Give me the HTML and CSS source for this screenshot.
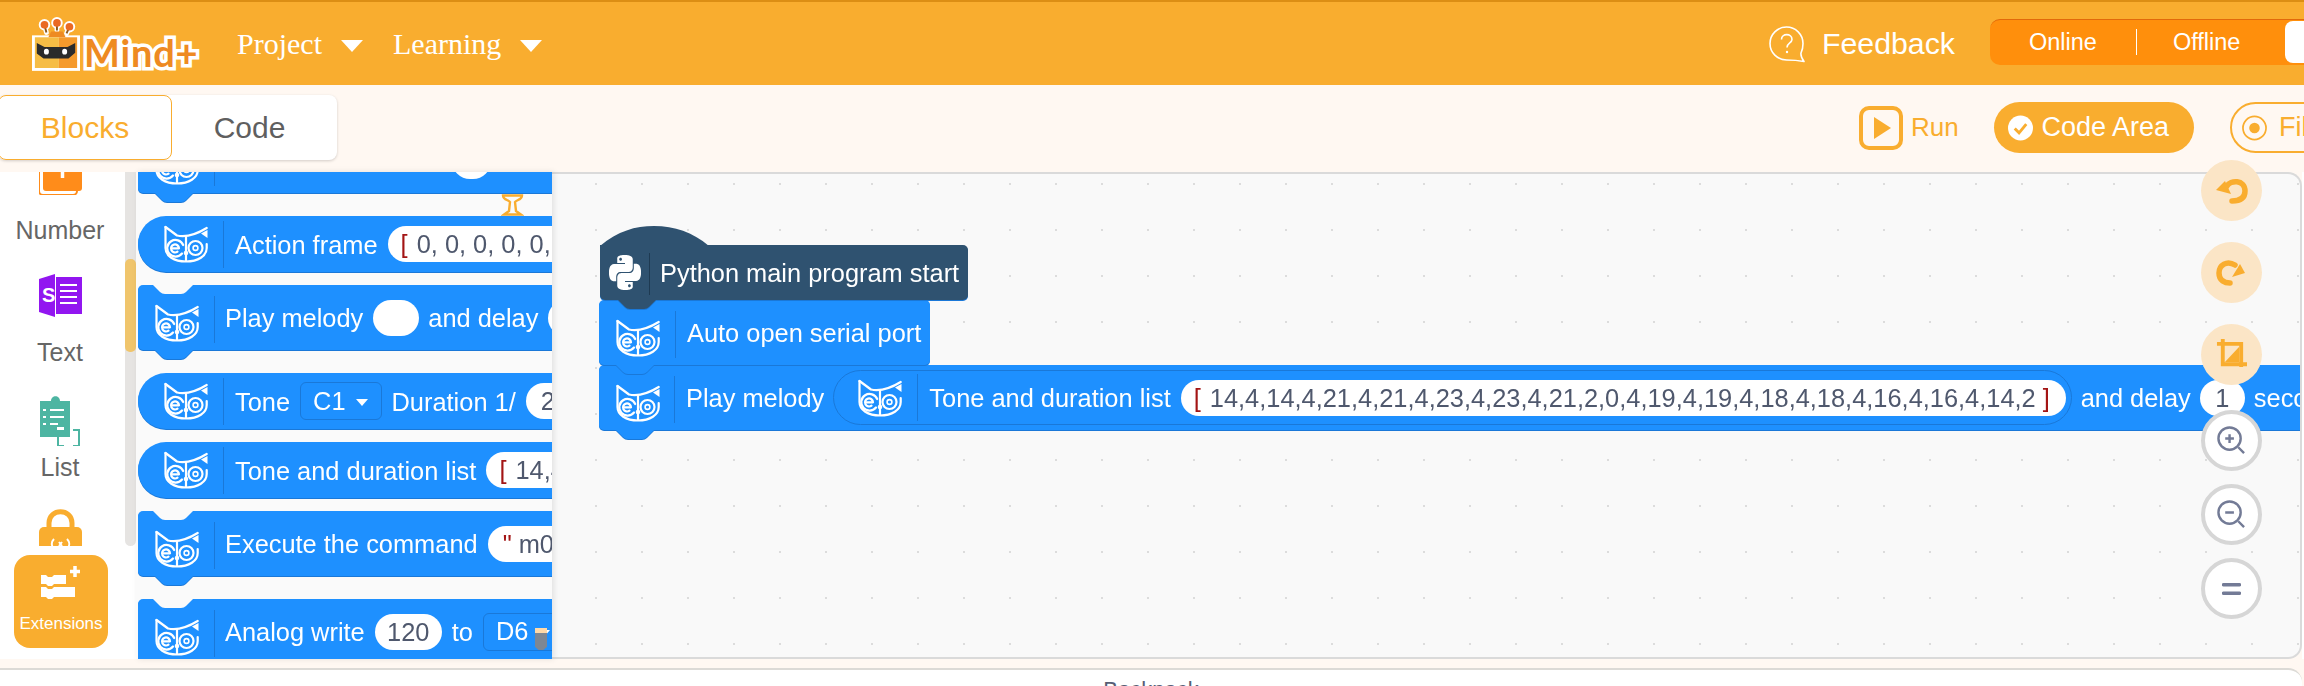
FILE: index.html
```html
<!DOCTYPE html>
<html lang="en">
<head>
<meta charset="utf-8">
<title>Mind+</title>
<link rel="stylesheet" href="styles.css">
</head>
<body>
<svg class="defs" width="0" height="0" aria-hidden="true">
  <symbol id="cat" viewBox="0 0 44 38">
    <g fill="none" stroke="#fff" stroke-width="2.2" stroke-linecap="round" stroke-linejoin="round">
      <path d="M1.5 2V23C1.5 31 10 36.5 22 36.5S42.7 31 42.7 23V19"/>
      <path d="M1.5 2L13 10.5C23 12.5 33 9 42.7 3"/>
      <path d="M22 11V36"/>
      <path d="M18 28.5A8.3 8.3 0 1 1 19.2 20"/>
      <path d="M7 23.3H15A4 4 0 1 0 13.5 26.6"/>
      <circle cx="31.5" cy="23" r="7"/>
      <circle cx="31.5" cy="23" r="2.4" stroke-width="1.6"/>
    </g>
    <circle cx="22" cy="28" r="2.3" fill="#fff"/>
    <path d="M37 8.5L43.5 5V13Z" fill="#fff"/>
  </symbol>
</svg>

<header class="topbar">
  <div class="logo">
    <svg class="robot" viewBox="0 0 50 56" aria-hidden="true">
      <path d="M15 16L13 8M26 14V6M36 17L39 10" stroke="#fff" stroke-width="5" stroke-linecap="round"/>
      <circle cx="13" cy="8" r="6" fill="#fff"/><circle cx="26" cy="6" r="6" fill="#fff"/><circle cx="39" cy="10" r="6" fill="#fff"/>
      <path d="M15 16L13 8M26 14V6M36 17L39 10" stroke="#8a5a20" stroke-width="2"/>
      <circle cx="13" cy="8" r="4" fill="#ea6a24"/><circle cx="26" cy="6" r="4" fill="#ea6a24"/><circle cx="39" cy="10" r="4" fill="#ea6a24"/>
      <rect x="0" y="19" width="50" height="37" fill="#fff"/>
      <path d="M17 21L20 15H32L35 21Z" fill="#ee8a22"/>
      <rect x="3" y="21" width="25" height="32" fill="#f6bd45"/>
      <rect x="28" y="21" width="19" height="32" fill="#f59a2c"/>
      <path d="M5 27L13 31H37L45 27V37L38 43H12L5 38Z" fill="#2b2b2b"/>
      <ellipse cx="15" cy="36" rx="2.600" ry="3" fill="#fff"/><ellipse cx="34" cy="36" rx="2.600" ry="3" fill="#fff"/>
    </svg>
    <span class="logo-text">Mind+</span>
  </div>
  <nav class="nav">
    <span class="nav-item">Project<i class="caret"></i></span>
    <span class="nav-item">Learning<i class="caret"></i></span>
  </nav>
  <div class="top-right">
    <div class="feedback">
      <svg class="fb-icon" viewBox="0 0 38 38" aria-hidden="true">
        <path d="M18.500 2A16.500 16.500 0 1 0 18.500 35C23 35 28 35 36 36.500C33.500 33 32.500 31 33 28C34.500 25 35 22 35 18.500A16.500 16.500 0 0 0 18.500 2Z" fill="none" stroke="#fff" stroke-width="1.600" stroke-linejoin="round"/>
        <path d="M13.500 14.500C13.500 8 24 8 24 14.500C24 18 19 18 19 22.500" fill="none" stroke="#fff" stroke-width="1.600"/>
        <circle cx="19" cy="27" r="1.200" fill="#fff"/>
      </svg>
      <span>Feedback</span>
    </div>
    <div class="mode">
      <span class="mode-item">Online</span>
      <i class="mode-div"></i>
      <span class="mode-item">Offline</span>
      <i class="mode-white"></i>
    </div>
  </div>
</header>

<div class="subbar">
  <div class="tabs">
    <span class="tab tab-on">Blocks</span>
    <span class="tab tab-code">Code</span>
  </div>
  <div class="actions">
    <span class="run">
      <svg class="run-icon" viewBox="0 0 44 44" aria-hidden="true">
        <rect x="2" y="2" width="40" height="40" rx="8" fill="none" stroke="#f9ad2f" stroke-width="4"/>
        <path d="M15 11L32 22L15 33Z" fill="#f9ad2f"/>
      </svg>
      Run
    </span>
    <span class="pill-btn pill-on">
      <svg class="pb-icon" viewBox="0 0 26 26" aria-hidden="true">
        <circle cx="13" cy="13" r="13" fill="#fff"/>
        <path d="M7 13.500L11.500 18L19 9" fill="none" stroke="#f9ad2f" stroke-width="3"/>
      </svg>
      Code Area
    </span>
    <span class="pill-btn pill-off">
      <svg class="pb-icon" viewBox="0 0 26 26" aria-hidden="true">
        <circle cx="13" cy="13" r="12" fill="none" stroke="#f9ad2f" stroke-width="1.800"/>
        <circle cx="13" cy="13" r="5.500" fill="#f9ad2f"/>
      </svg>
      File Area
    </span>
  </div>
</div>

<main class="main">
  <aside class="sidebar">
    <div class="cat-item first">
      <svg class="cat-icon" viewBox="0 0 43 43" aria-hidden="true">
        <rect x="0" y="5" width="38" height="38" rx="4" fill="none" stroke="#ff8c1a" stroke-width="2"/>
        <rect x="4" y="0" width="39" height="39" rx="3" fill="#ff8c1a"/>
        <path d="M23.500 8V26" stroke="#fff" stroke-width="3.500"/>
      </svg>
      <span class="cat-label">Number</span>
    </div>
    <div class="cat-item">
      <svg class="cat-icon" viewBox="0 0 43 43" aria-hidden="true">
        <path d="M0 5L16 0V43L0 38Z" fill="#9216f0"/>
        <rect x="17" y="3" width="26" height="37" fill="#9216f0"/>
        <path d="M21 11H38M21 17H38M21 23H38M21 29H38" stroke="#fff" stroke-width="2"/>
        <text class="s-letter" x="3" y="28">S</text>
      </svg>
      <span class="cat-label">Text</span>
    </div>
    <div class="cat-item list">
      <svg class="cat-icon" viewBox="0 0 40 50" aria-hidden="true">
        <path d="M0 5H11C11 -1.500 20 -1.500 20 5H30V41H0Z" fill="#4db5a2"/>
        <path d="M10 21H24M10 14H24M10 28H18M3 14H6M3 21H6M3 28H6" stroke="#fff" stroke-width="2"/>
        <path d="M24 34H18V50H24M33 34H39V50H33" fill="none" stroke="#4db5a2" stroke-width="2"/>
        <rect x="17" y="31" width="7" height="3" fill="#fff"/>
      </svg>
      <span class="cat-label">List</span>
    </div>
    <div class="cat-item">
      <svg class="cat-icon" viewBox="0 0 43 43" aria-hidden="true">
        <path d="M10 20V14C10 -1 33 -1 33 14V20" fill="none" stroke="#f9ad2f" stroke-width="5"/>
        <rect x="0" y="18" width="43" height="30" rx="5" fill="#f9ad2f"/>
        <path d="M15 30C12 33 12 37 15 40M28 30C31 33 31 37 28 40" fill="none" stroke="#fff" stroke-width="2"/>
        <path d="M20 33L23 37M23 33L20 37" stroke="#fff" stroke-width="2"/>
      </svg>
    </div>
    <div class="ext-wrap">
      <div class="ext">
        <svg class="ext-icon" viewBox="0 0 40 34" aria-hidden="true">
          <path d="M0 9H5L7 11H11L13 9H25V18H13L11 20H7L5 18H0Z" fill="#fff"/>
          <path d="M0 21H5L7 23H11L13 21H34V31H13L11 33H7L5 31H0Z" fill="#fff"/>
          <path d="M34 0V11M29 5.500H39" stroke="#fff" stroke-width="3.500"/>
        </svg>
        <span>Extensions</span>
      </div>
    </div>
  </aside>

  <div class="track"><i class="thumb"></i></div>

  <section class="flyout">
    <div class="block stack clipped">
      <svg class="cat"><use href="#cat"/></svg><i class="sep"></i>
      <span class="pill blank-end"></span>
    </div>
    <div class="block reporter">
      <svg class="cat"><use href="#cat"/></svg><i class="sep"></i>
      <span class="lbl">Action frame</span>
      <span class="pill long"><b class="br br-open">[</b> 0, 0, 0, 0, 0, 0, 0</span>
    </div>
    <div class="block stack">
      <svg class="cat"><use href="#cat"/></svg><i class="sep"></i>
      <span class="lbl">Play melody</span>
      <span class="pill blank tight"></span>
      <span class="lbl">and delay</span>
      <span class="pill blank"></span>
    </div>
    <div class="block reporter">
      <svg class="cat"><use href="#cat"/></svg><i class="sep"></i>
      <span class="lbl">Tone</span>
      <span class="drop">C1<i class="tri"></i></span>
      <span class="lbl">Duration 1/</span>
      <span class="pill">2</span>
    </div>
    <div class="block reporter">
      <svg class="cat"><use href="#cat"/></svg><i class="sep"></i>
      <span class="lbl">Tone and duration list</span>
      <span class="pill long"><b class="br br-open">[</b> 14,4,14,4</span>
    </div>
    <div class="block stack">
      <svg class="cat"><use href="#cat"/></svg><i class="sep"></i>
      <span class="lbl">Execute the command</span>
      <span class="pill long"><b class="br">"</b> m0 m1</span>
    </div>
    <div class="block stack">
      <svg class="cat"><use href="#cat"/></svg><i class="sep"></i>
      <span class="lbl">Analog write</span>
      <span class="pill num">120</span>
      <span class="lbl">to</span>
      <span class="drop">D6<i class="tri"></i></span>
    </div>
    <svg class="pin" viewBox="0 0 23 22" aria-hidden="true">
      <path d="M2 1.500H21C21 6 15 6 14 8L15 17L20 20.500H3L8 17L9 8C8 6 2 6 2 1.500Z" fill="none" stroke="#f9ad2f" stroke-width="2.400"/>
    </svg>
    <i class="cursor"></i>
  </section>

  <section class="workspace">
    <div class="canvas">
      <div class="script">
        <div class="block stack hat">
          <svg class="py" viewBox="0 0 24 24" preserveAspectRatio="none" aria-hidden="true">
            <path fill="#fff" d="M14.25.18l.9.2.73.26.59.3.45.32.34.34.25.34.16.33.1.3.04.26.02.2-.01.13V8.5l-.05.63-.13.55-.21.46-.26.38-.3.31-.33.25-.35.19-.35.14-.33.1-.3.07-.26.04-.21.02H8.77l-.69.05-.59.14-.5.22-.41.27-.33.32-.27.35-.2.36-.15.37-.1.35-.07.32-.04.27-.02.21v3.06H3.17l-.21-.03-.28-.07-.32-.12-.35-.18-.36-.26-.36-.36-.35-.46-.32-.59-.28-.73-.21-.88-.14-1.05-.05-1.23.06-1.22.16-1.04.24-.87.32-.71.36-.57.4-.44.42-.33.42-.24.4-.16.36-.1.32-.05.24-.01h.16l.06.01h8.16v-.83H6.18l-.01-2.75-.02-.37.05-.34.11-.31.17-.28.25-.26.31-.23.38-.2.44-.18.51-.15.58-.12.64-.1.71-.06.77-.04.84-.02 1.27.05zm-6.3 1.98l-.23.33-.08.41.08.41.23.34.33.22.41.09.41-.09.33-.22.23-.34.08-.41-.08-.41-.23-.33-.33-.22-.41-.09-.41.09zm13.09 3.95l.28.06.32.12.35.18.36.27.36.35.35.47.32.59.28.73.21.88.14 1.04.05 1.23-.06 1.23-.16 1.04-.24.86-.32.71-.36.57-.4.45-.42.33-.42.24-.4.16-.36.09-.32.05-.24.02-.16-.01h-8.22v.82h5.84l.01 2.76.02.36-.05.34-.11.31-.17.29-.25.25-.31.24-.38.2-.44.17-.51.15-.58.13-.64.09-.71.07-.77.04-.84.01-1.27-.04-1.07-.14-.9-.2-.73-.25-.59-.3-.45-.33-.34-.34-.25-.34-.16-.33-.1-.3-.04-.25-.02-.2.01-.13v-5.34l.05-.64.13-.54.21-.46.26-.38.3-.32.33-.24.35-.2.35-.14.33-.1.3-.06.26-.04.21-.02.13-.01h5.84l.69-.05.59-.14.5-.21.41-.28.33-.32.27-.35.2-.36.15-.36.1-.35.07-.32.04-.28.02-.21V6.07h2.09l.14.01zm-6.47 14.25l-.23.33-.08.41.08.41.23.33.33.23.41.08.41-.08.33-.23.23-.33.08-.41-.08-.41-.23-.33-.33-.23-.41-.08-.41.08z"/>
          </svg>
          <i class="sep sep-dark"></i>
          <span class="lbl">Python main program start</span>
        </div>
        <div class="block stack auto">
          <svg class="cat"><use href="#cat"/></svg><i class="sep"></i>
          <span class="lbl">Auto open serial port</span>
        </div>
        <div class="block stack melody">
          <svg class="cat"><use href="#cat"/></svg><i class="sep"></i>
          <span class="lbl">Play melody</span>
          <div class="block reporter nested">
            <svg class="cat"><use href="#cat"/></svg><i class="sep"></i>
            <span class="lbl">Tone and duration list</span>
            <span class="pill tune"><b class="br br-open">[</b> 14,4,14,4,21,4,21,4,23,4,23,4,21,2,0,4,19,4,19,4,18,4,18,4,16,4,16,4,14,2 <b class="br">]</b></span>
          </div>
          <span class="lbl">and delay</span>
          <span class="pill sec">1</span>
          <span class="lbl">seconds</span>
        </div>
      </div>
    </div>

    <div class="tools">
      <span class="tool warm">
        <svg viewBox="0 0 32 26" class="t-undo" aria-hidden="true">
          <path d="M11 8C14 2 29 1 29 13C29 22 21 23 16 23" fill="none" stroke="#f9ad2f" stroke-width="5.500" stroke-linecap="round"/>
          <path d="M0 12L9 3L15 16Z" fill="#f9ad2f"/>
        </svg>
      </span>
      <span class="tool warm">
        <svg viewBox="0 0 32 26" class="t-undo" aria-hidden="true">
          <path d="M19 5C11 0 3 5 3 13C3 21 9 23 14 23" fill="none" stroke="#f9ad2f" stroke-width="5.500" stroke-linecap="round"/>
          <path d="M29 13L16 17L24 4Z" fill="#f9ad2f"/>
        </svg>
      </span>
      <span class="tool warm crop-gap">
        <svg viewBox="0 0 32 32" class="t-crop" aria-hidden="true">
          <path d="M1 5H26V29M7 0V26H32" fill="none" stroke="#f9ad2f" stroke-width="4"/>
          <path d="M9 24L24 8V24Z" fill="#f9ad2f"/>
        </svg>
      </span>
      <span class="tool zoom">
        <svg viewBox="0 0 30 30" class="t-zoom" aria-hidden="true">
          <circle cx="13" cy="13" r="11.500" fill="none" stroke="#737b96" stroke-width="2.500"/>
          <path d="M22 22L28 28M8.500 13H17.500M13 8.500V17.500" stroke="#737b96" stroke-width="2.500"/>
        </svg>
      </span>
      <span class="tool zoom">
        <svg viewBox="0 0 30 30" class="t-zoom" aria-hidden="true">
          <circle cx="13" cy="13" r="11.500" fill="none" stroke="#737b96" stroke-width="2.500"/>
          <path d="M22 22L28 28M8.500 13H17.500" stroke="#737b96" stroke-width="2.500"/>
        </svg>
      </span>
      <span class="tool zoom">
        <svg viewBox="0 0 20 14" class="t-eq" aria-hidden="true">
          <path d="M1.500 2.500H18.500M1.500 11.500H18.500" stroke="#737b96" stroke-width="3.500" stroke-linecap="round"/>
        </svg>
      </span>
    </div>
  </section>
</main>

<footer class="backpack">Backpack</footer>
</body>
</html>
```
FILE: styles.css
```css
* { box-sizing: border-box; }
html, body { margin: 0; padding: 0; }
body {
  width: 2304px;
  height: 686px;
  overflow: hidden;
  background: #fff8f2;
  font-family: "Liberation Sans", Arial, sans-serif;
  color: #fff;
}
.defs { position: absolute; }

/* Top bar */
.topbar {
  display: flex;
  align-items: center;
  height: 85px;
  background: #f9ad2f;
  border-top: 2px solid #dc8e14;
}
.logo { display: flex; align-items: flex-end; margin-left: 32px; width: 205px; height: 60px; }
.robot { width: 48px; height: 54px; flex: none; margin-bottom: 3px; }
.logo-text {
  font-family: "Lato", "Liberation Sans", sans-serif;
  font-weight: 700;
  font-size: 38px;
  line-height: 44px;
  letter-spacing: 0.8px;
  color: #ee8a22;
  -webkit-text-stroke: 7px #fff;
  paint-order: stroke fill;
  margin-left: 4px;
}
.nav { display: flex; gap: 30px; font-family: "Liberation Serif", "Times New Roman", serif; font-size: 30px; }
.nav-item { display: flex; align-items: center; }
.caret {
  margin: 5px 0 0 19px;
  border-left: 11px solid transparent;
  border-right: 11px solid transparent;
  border-top: 12px solid #fff;
}
.top-right { display: flex; align-items: center; margin-left: auto; }
.feedback { display: flex; align-items: center; gap: 16px; font-size: 30.3px; margin-right: 35px; }
.fb-icon { width: 38px; height: 38px; }
.mode {
  display: flex;
  align-items: center;
  width: 314px;
  height: 46px;
  margin-top: -4px;
  padding-left: 39px;
  background: #ff8f0c;
  border-top: 1px solid #e2690a;
  border-radius: 10px 0 0 10px;
  font-size: 23.5px;
}
.mode-div { width: 1px; height: 26px; background: #fff; margin: 0 36px 0 39px; }
.mode-white { width: 19px; height: 42px; margin-left: auto; background: #fff; border-radius: 8px 0 0 8px; }

/* Second bar */
.subbar { display: flex; height: 87px; padding-top: 10px; background: #fff8f2; }
.tabs {
  display: flex;
  height: 65px;
  background: #fff;
  border-radius: 8px;
  box-shadow: 0 1px 3px rgba(0, 0, 0, 0.18);
  margin-left: -2px;
}
.tab {
  display: flex;
  align-items: center;
  justify-content: center;
  font-size: 30px;
  color: #5f5f5f;
}
.tab-code { width: 165px; padding-right: 10px; }
.tab-on {
  width: 174px;
  color: #f9ad2f;
  border: 1.5px solid #f9ad2f;
  border-radius: 8px;
}
.actions {
  display: flex;
  flex: none;
  align-items: center;
  width: 445px;
  height: 51px;
  margin: 7px 0 0 auto;
  overflow: hidden;
  color: #f9ad2f;
}
.run { display: flex; align-items: center; flex: none; gap: 8px; font-size: 26px; width: 134.5px; }
.run-icon { width: 44px; height: 44px; }
.pill-btn {
  display: flex;
  align-items: center;
  flex: none;
  gap: 9px;
  height: 51px;
  padding: 0 14px;
  border-radius: 26px;
  font-size: 27px;
}
.pill-on { width: 200.5px; background: #f9ad2f; color: #fff; margin-right: 36px; }
.pill-off { width: 240px; gap: 12px; border: 2px solid #f9ad2f; padding: 0 10px; }
.pb-icon { width: 25px; height: 26px; flex: none; }

/* Main row */
.main { position: relative; display: flex; height: 487px; background: #fff; }
.sidebar { position: relative; flex: none; width: 125px; overflow: hidden; color: #666; }
.cat-item { display: flex; flex-direction: column; align-items: center; width: 120px; margin-bottom: 29.5px; }
.cat-item.first { margin-top: -20px; }
.cat-item.list { margin-bottom: 27.5px; }
.cat-icon { width: 43px; height: 43px; margin-bottom: 19.5px; flex: none; }
.list .cat-icon { width: 40px; height: 50px; margin-bottom: 5.5px; }
.cat-label { font-size: 25px; line-height: 30px; }
.s-letter { font-family: "Liberation Sans", sans-serif; font-size: 20px; font-weight: 700; fill: #fff; }
.ext-wrap { position: absolute; left: 0; right: 0; bottom: 0; height: 113px; padding: 9px 0 0 14px; background: #fff; }
.ext {
  display: flex;
  flex-direction: column;
  align-items: center;
  width: 94px;
  height: 93px;
  padding-top: 11px;
  background: #f9ad2f;
  border-radius: 16px;
  color: #fff;
  font-size: 17px;
}
.ext-icon { width: 40px; height: 34px; margin-bottom: 14px; }

.track { flex: none; width: 11px; height: 374px; background: #e6e4e2; border-radius: 0 0 6px 6px; padding-top: 87px; }
.thumb { display: block; height: 93px; background: #f0c56c; border-radius: 5px; }

/* Flyout */
.flyout {
  position: relative;
  flex: none;
  width: 416px;
  padding-left: 2px;
  overflow: hidden;
  background: #fafafa;
  box-shadow: 2px 0 6px rgba(0, 0, 0, 0.1);
  z-index: 2;
}
.pin { position: absolute; left: 365px; top: 22px; width: 23px; height: 22px; }
.cursor {
  position: absolute;
  left: 399px;
  top: 456px;
  width: 12px;
  height: 22px;
  background: linear-gradient(#ffd9a8 0 5px, #7d8794 5px);
  clip-path: polygon(0 0, 100% 0, 100% 85%, 70% 100%, 30% 100%, 0 85%);
}

/* Blocks */
.block {
  display: flex;
  flex: none;
  align-items: center;
  gap: 10px;
  position: relative;
  background: #1e90ff;
  color: #fff;
  font-size: 25.4px;
  white-space: nowrap;
  filter: drop-shadow(0 1px 0 #1a78d8);
}
.flyout .block { width: 480px; }
.lbl { padding-top: 2px; }
.stack { height: 65px; padding-left: 17px; margin-bottom: 23px; border-radius: 5px; }
.reporter { height: 56px; padding-left: 26px; margin-bottom: 13px; border-radius: 28px 0 0 28px; }
.clipped { margin-top: -44px; }
.stack::after {
  content: "";
  position: absolute;
  left: 17px;
  top: 100%;
  width: 38px;
  height: 9px;
  background: inherit;
  clip-path: path("M0 0L7 7Q9 9 12 9H26Q29 9 31 7L38 0Z");
}
.flyout .stack::before {
  content: "";
  position: absolute;
  left: 15px;
  top: 0;
  width: 40px;
  height: 9px;
  background: #fafafa;
  clip-path: path("M0 0L7 7Q9 9 12 9H28Q31 9 33 7L40 0Z");
}
.flyout .clipped::before { display: none; }
.cat { width: 44px; height: 38px; flex: none; }
.stack > .cat { margin-top: 10px; }
.sep { flex: none; width: 1px; height: 47px; margin: 0 1px 0 5px; background: #1a78d8; }
.flyout .stack > .sep { margin-right: 0; }
.stack > .sep { margin-top: 3px; }
.pill {
  flex: none;
  height: 36px;
  line-height: 36px;
  padding: 0 15px;
  background: #fff;
  border-radius: 18px;
  color: #4f586d;
}
.blank { width: 46px; padding: 0; }
.tight { margin-right: -1px; }
.long { width: 220px; }
.num { width: 67px; padding: 0; text-align: center; }
.blank-end { width: 39px; padding: 0; margin-left: 227px; }
.br { font-weight: 400; color: #a31515; }
.br-open { margin: 0 2px 0 -2px; }
.drop {
  display: flex;
  align-items: center;
  flex: none;
  height: 38px;
  padding: 0 13px 0 12px;
  border: 1px solid #1a78d8;
  border-radius: 6px;
}
.tri {
  margin: 3px 0 0 10px;
  border-left: 6.5px solid transparent;
  border-right: 6.5px solid transparent;
  border-top: 7px solid #fff;
}

/* Workspace */
.workspace {
  position: relative;
  flex: none;
  width: 1750px;
  background: #fff8f2;
}
.canvas {
  position: absolute;
  inset: 0;
  overflow: hidden;
  background-color: #f9f9f9;
  background-image: radial-gradient(circle, #dcdcdc 1.1px, transparent 1.4px);
  background-size: 46px 46px;
  background-position: 21px -13px;
  border-top: 2px solid #dadada;
  border-right: 2px solid #dadada;
  border-bottom: 2px solid #dadada;
  border-radius: 0 14px 14px 0;
}
.script { position: absolute; left: 47px; top: 71px; display: flex; flex-direction: column; align-items: flex-start; }
.script .stack { margin-bottom: 0; }
.hat {
  width: 368px;
  height: 55px;
  margin-left: 1px;
  padding-left: 9px;
  gap: 9px;
  background: #2f5270;
  z-index: 3;
  border-radius: 0 5px 5px 5px;
}
.hat::before {
  content: "";
  position: absolute;
  left: 0;
  top: -19px;
  width: 109px;
  height: 20px;
  background: #2f5270;
  clip-path: path("M0 20C18 5 35 0 54 0C75 0 92 6 109 20Z");
}
.hat > * { position: relative; }
.hat::after { left: 18px; }
.py { width: 32px; height: 35px; flex: none; margin-left: 0; }
.sep-dark { background: #1e3a52; height: 42px; margin: 0 1px 0 -1px; }
.auto { width: 331px; z-index: 2; }
.melody { z-index: 1; gap: 9px; }
.melody > .sep { margin-right: 2px; }
.nested { height: 55px; margin: 0; padding-left: 24px; padding-right: 5px; border-radius: 28px; border: 1px solid #1a78d8; filter: none; }
.nested .sep { margin-top: 0; }
.tune { width: 885px; }
.sec { width: 45px; padding: 0; text-align: center; }

/* Floating tools */
.tools {
  position: absolute;
  left: 1649px;
  top: -12px;
  display: flex;
  flex-direction: column;
  gap: 21px;
  z-index: 5;
}
.tool { display: flex; align-items: center; justify-content: center; width: 61px; height: 61px; border-radius: 50%; }
.warm { background: #fbe5c6; }
.zoom { background: #fff; border: 4px solid #d6d6d6; margin-top: -8px; }
.crop-gap { margin-bottom: 12px; }
.t-undo { width: 32px; height: 26px; }
.t-crop { width: 31px; height: 31px; }
.t-zoom { width: 29px; height: 29px; }
.t-eq { width: 19px; height: 14px; }

/* Backpack */
.backpack {
  height: 18px;
  margin: 9px 2px 0 0;
  padding-top: 7px;
  background: #fff;
  border-top: 2px solid #dcdad6;
  border-radius: 0 14px 0 0;
  color: #575e75;
  font-size: 22px;
  line-height: 26px;
  text-align: center;
  overflow: hidden;
}
```
